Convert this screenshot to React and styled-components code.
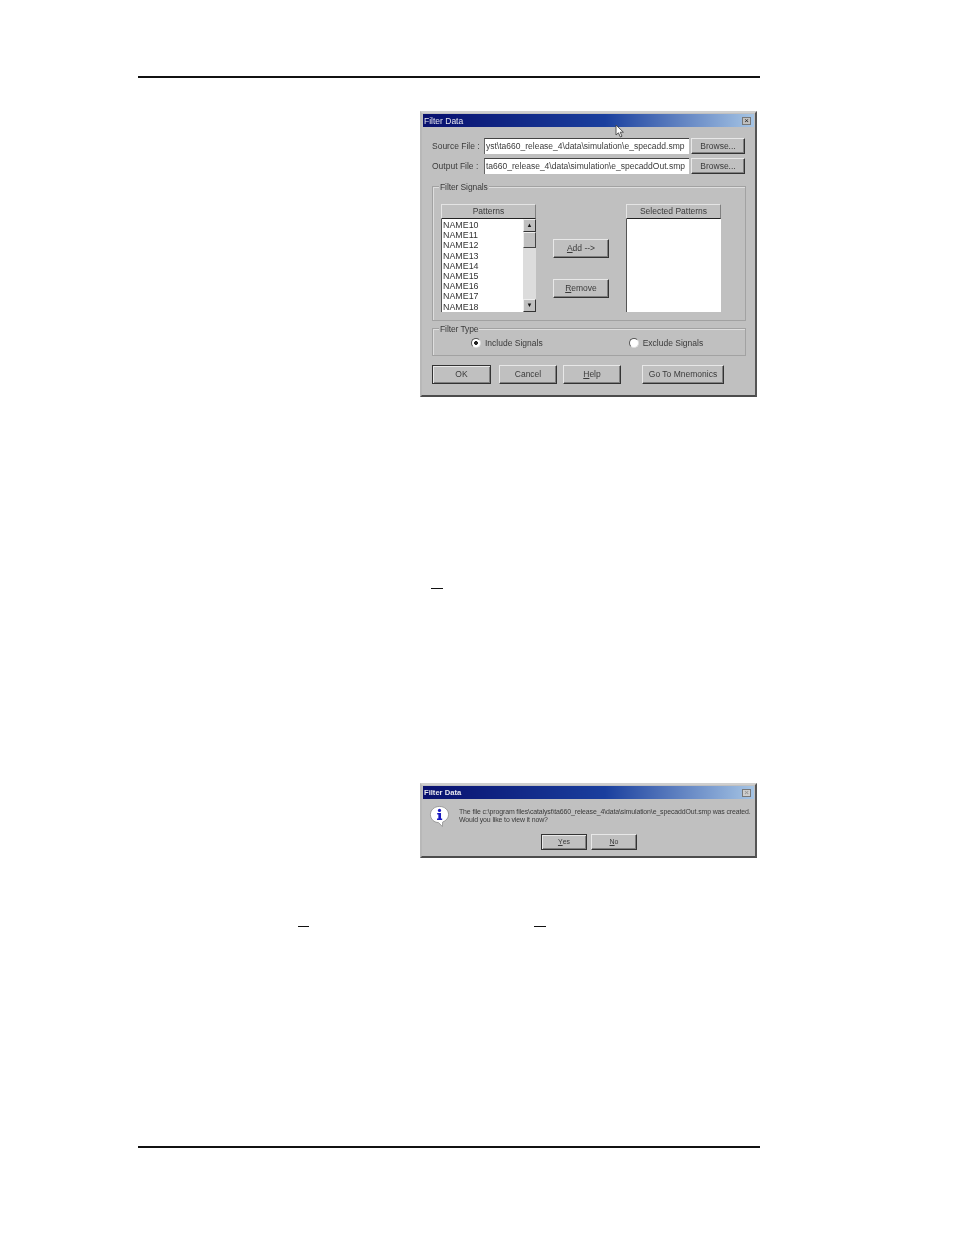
import styled, { createGlobalStyle } from "styled-components";

const Global = createGlobalStyle`
  html, body { margin: 0; padding: 0; background: #fff; }
  body { font-family: "Liberation Sans", Arial, sans-serif; }
`;

const names = ["NAME10", "NAME11", "NAME12", "NAME13", "NAME14", "NAME15", "NAME16", "NAME17", "NAME18"];

export default function App() {
  return (
    <Page>
      <Global />
      <Rule />
      <DialogSlot $top={33}>
        <Window $height={286}>
          <TitleBar>
            <span>Filter Data</span>
            <CloseBox>×</CloseBox>
          </TitleBar>
          <Cursor viewBox="0 0 10 14" aria-hidden="true">
            <path d="M1 1 L1 11 L3.4 8.8 L5.4 13 L7 12.2 L5.2 8.2 L8.4 8.2 Z" fill="#fff" stroke="#444" strokeWidth="0.9" />
          </Cursor>
          <Body>
            <FileRow>
              <FileLabel>Source File :</FileLabel>
              <FileInput>yst\ta660_release_4\data\simulation\e_specadd.smp</FileInput>
              <Button $w={54} $h={16}>Browse...</Button>
            </FileRow>
            <FileRow $gap={4}>
              <FileLabel>Output File :</FileLabel>
              <FileInput>ta660_release_4\data\simulation\e_specaddOut.smp</FileInput>
              <Button $w={54} $h={16}>Browse...</Button>
            </FileRow>
            <SignalsGroup>
              <Legend>Filter Signals</Legend>
              <Column>
                <ColumnHead>Patterns</ColumnHead>
                <ListBox>
                  <ListItems>
                    {names.map((n) => (
                      <div key={n}>{n}</div>
                    ))}
                  </ListItems>
                  <ScrollBar>
                    <ScrollArrow>▲</ScrollArrow>
                    <ScrollThumb />
                    <ScrollTrack />
                    <ScrollArrow>▼</ScrollArrow>
                  </ScrollBar>
                </ListBox>
              </Column>
              <MoveButtons>
                <Button $w={56} $h={19}><u>A</u>dd --&gt;</Button>
                <Button $w={56} $h={19}><u>R</u>emove</Button>
              </MoveButtons>
              <Column>
                <ColumnHead>Selected Patterns</ColumnHead>
                <ListBox />
              </Column>
            </SignalsGroup>
            <TypeGroup>
              <Legend>Filter Type</Legend>
              <Radio $left={38}>
                <RadioDot $on />
                Include Signals
              </Radio>
              <Radio $left={86}>
                <RadioDot />
                Exclude Signals
              </Radio>
            </TypeGroup>
            <Actions>
              <Button $w={59} $h={19} $default>OK</Button>
              <Button $w={58} $h={19} $ml={8}>Cancel</Button>
              <Button $w={58} $h={19} $ml={6}><u>H</u>elp</Button>
              <Button $w={82} $h={19} $ml={21}>Go To Mnemonics</Button>
            </Actions>
          </Body>
        </Window>
      </DialogSlot>
      <MarkRow $top={191} $left={293}>
        <Mark $w={12} />
      </MarkRow>
      <DialogSlot $top={194}>
        <Window $height={75}>
          <TitleBar $bold>
            <span>Filter Data</span>
            <CloseBox $faded>×</CloseBox>
          </TitleBar>
          <MessageBody>
            <InfoIcon viewBox="0 0 22 24" aria-hidden="true">
              <path d="M11 1.5 C5.5 1.5 1.5 5.2 1.5 10 C1.5 14.6 5.2 18.2 10 18.4 L14 22.5 L14.3 17.8 C18 16.4 20.5 13.6 20.5 10 C20.5 5.2 16.5 1.5 11 1.5 Z" fill="#fff" stroke="#8a8a8a" strokeWidth="0.8" />
              <circle cx="11" cy="5.6" r="1.7" fill="#1a1ac0" />
              <path d="M8.6 8.4 H12.6 V14 H13.8 V15.6 H8.4 V14 H9.8 V10 H8.6 Z" fill="#1a1ac0" />
            </InfoIcon>
            <MessageText>
              <div>The file c:\program files\catalyst\ta660_release_4\data\simulation\e_specaddOut.smp was created.</div>
              <div>Would you like to view it now?</div>
            </MessageText>
          </MessageBody>
          <MessageActions>
            <Button $w={46} $h={16} $default $small><u>Y</u>es</Button>
            <Button $w={46} $h={16} $small><u>N</u>o</Button>
          </MessageActions>
        </Window>
      </DialogSlot>
      <MarkRow $top={68} $left={160}>
        <Mark $w={11} />
        <Mark $w={12} $ml={225} />
      </MarkRow>
      <Rule $top={219} />
    </Page>
  );
}

const Page = styled.div`
  width: 622px;
  height: 1235px;
  margin-left: 138px;
  padding-top: 76px;
  box-sizing: border-box;
  overflow: hidden;
`;

const Rule = styled.div`
  height: 2px;
  background: #111;
  margin-top: ${(p) => p.$top || 0}px;
`;

const DialogSlot = styled.div`
  margin-top: ${(p) => p.$top}px;
  padding-left: 282px;
`;

const Window = styled.div`
  position: relative;
  width: 337px;
  height: ${(p) => p.$height}px;
  box-sizing: border-box;
  background: #c0c0c0;
  border: 2px solid;
  border-color: #cfcfcf #555 #4c4c4c #b8b8b8;
  padding: 1px;
  color: #3a3a3a;
  filter: blur(0.45px);
`;

const TitleBar = styled.div`
  height: 13px;
  display: flex;
  align-items: center;
  justify-content: space-between;
  padding: 0 3px 0 1px;
  background: linear-gradient(90deg, #08106e 0%, #1a3f9e 55%, #a5c4e4 100%);
  color: #e6e6ee;
  font-size: ${(p) => (p.$bold ? 7.6 : 8.5)}px;
  font-weight: ${(p) => (p.$bold ? 700 : 400)};
`;

const CloseBox = styled.div`
  width: 9px;
  height: 8px;
  background: ${(p) => (p.$faded ? "#cfcfcf" : "#c0c0c0")};
  border: 1px solid #777;
  box-sizing: border-box;
  color: ${(p) => (p.$faded ? "#999" : "#222")};
  font-size: 8px;
  line-height: 6px;
  text-align: center;
`;

const Cursor = styled.svg`
  position: absolute;
  left: 193px;
  top: 11px;
  width: 10px;
  height: 14px;
`;

const Body = styled.div`
  padding: 11px 8px 0 9px;
  font-size: 8.5px;
`;

const FileRow = styled.div`
  display: flex;
  align-items: center;
  margin-top: ${(p) => p.$gap || 0}px;
`;

const FileLabel = styled.div`
  width: 52px;
  white-space: nowrap;
  flex: none;
`;

const FileInput = styled.div`
  width: 205px;
  height: 16px;
  box-sizing: border-box;
  margin-right: 2px;
  padding: 0 0 0 1px;
  background: #fff;
  border-top: 1px solid #444;
  border-left: 1px solid #666;
  line-height: 14px;
  white-space: nowrap;
  overflow: hidden;
  flex: none;
`;

const Button = styled.div`
  width: ${(p) => p.$w}px;
  height: ${(p) => p.$h}px;
  margin-left: ${(p) => p.$ml || 0}px;
  padding-bottom: 1px;
  flex: none;
  box-sizing: border-box;
  display: flex;
  align-items: center;
  justify-content: center;
  background: #c0c0c0;
  border: 1px solid;
  border-color: ${(p) => (p.$default ? "#333" : "#e8e8e8 #333 #333 #e8e8e8")};
  box-shadow: ${(p) =>
    p.$default ? "inset 1px 1px 0 #e8e8e8, inset -1px -1px 0 #808080" : "inset -1px -1px 0 #808080"};
  font-size: ${(p) => (p.$small ? 7 : 8.5)}px;
  white-space: nowrap;
`;

const Group = styled.div`
  position: relative;
  box-sizing: border-box;
  width: 314px;
  border: 1px solid #a2a2a2;
  box-shadow: inset 1px 1px 0 #dedede;
`;

const SignalsGroup = styled(Group)`
  height: 135px;
  margin-top: 12px;
  padding: 17px 24px 0 8px;
  display: flex;
  justify-content: space-between;
`;

const TypeGroup = styled(Group)`
  height: 28px;
  margin-top: 7px;
  padding-top: 2px;
  display: flex;
  align-items: center;
`;

const Legend = styled.div`
  position: absolute;
  left: 6px;
  top: -5px;
  padding: 0 1px;
  background: #c0c0c0;
  line-height: 11px;
  letter-spacing: -0.1px;
`;

const Column = styled.div`
  width: 95px;
  flex: none;
`;

const ColumnHead = styled.div`
  height: 15px;
  box-sizing: border-box;
  background: #c0c0c0;
  border: 1px solid;
  border-color: #e4e4e4 #808080 #222 #e4e4e4;
  text-align: center;
  line-height: 13px;
`;

const ListBox = styled.div`
  height: 93px;
  display: flex;
  background: #fff;
  border-left: 1px solid #555;
  overflow: hidden;
`;

const ListItems = styled.div`
  flex: 1;
  padding: 1px 0 0 1px;
  font-size: 8.9px;
  line-height: 10.2px;
  color: #333;
`;

const ScrollBar = styled.div`
  width: 13px;
  display: flex;
  flex-direction: column;
  background: #dcdcdc;
`;

const ScrollArrow = styled.div`
  height: 13px;
  box-sizing: border-box;
  background: #c0c0c0;
  border: 1px solid;
  border-color: #eee #333 #333 #eee;
  color: #111;
  font-size: 6px;
  line-height: 11px;
  text-align: center;
`;

const ScrollThumb = styled.div`
  height: 16px;
  box-sizing: border-box;
  background: #c0c0c0;
  border: 1px solid;
  border-color: #eee #444 #444 #eee;
`;

const ScrollTrack = styled.div`
  flex: 1;
`;

const MoveButtons = styled.div`
  width: 56px;
  margin-top: 35px;
  display: flex;
  flex-direction: column;
  gap: 21px;
  flex: none;
`;

const Radio = styled.div`
  display: flex;
  align-items: center;
  gap: 4px;
  margin-left: ${(p) => p.$left}px;
  white-space: nowrap;
`;

const RadioDot = styled.span`
  width: 10px;
  height: 10px;
  box-sizing: border-box;
  border-radius: 50%;
  background: ${(p) =>
    p.$on ? "radial-gradient(circle, #222 0 1.6px, #fff 2.2px)" : "#fff"};
  border: 1px solid;
  border-color: #555 #ddd #ddd #555;
`;

const Actions = styled.div`
  display: flex;
  margin-top: 9px;
`;

const MessageBody = styled.div`
  display: flex;
  padding: 6px 0 0 6px;
`;

const InfoIcon = styled.svg`
  width: 21px;
  height: 23px;
  flex: none;
`;

const MessageText = styled.div`
  margin: 3px 0 0 9px;
  font-size: 6.95px;
  line-height: 8px;
  letter-spacing: -0.12px;
  white-space: nowrap;
`;

const MessageActions = styled.div`
  display: flex;
  justify-content: center;
  gap: 4px;
  margin: 6px 0 0 1px;
`;

const MarkRow = styled.div`
  display: flex;
  margin-top: ${(p) => p.$top}px;
  padding-left: ${(p) => p.$left}px;
  height: 1px;
`;

const Mark = styled.div`
  width: ${(p) => p.$w}px;
  height: 1px;
  margin-left: ${(p) => p.$ml || 0}px;
  background: #111;
`;
